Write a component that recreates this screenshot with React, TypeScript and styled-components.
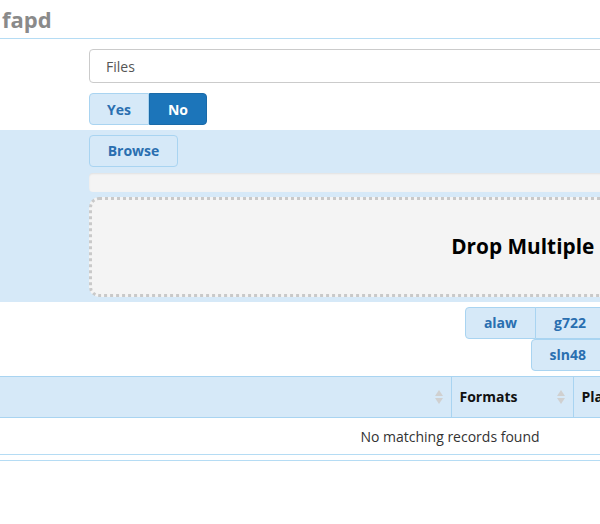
import React from 'react'
import styled, { createGlobalStyle } from 'styled-components'

const GlobalStyle = createGlobalStyle`
  html, body {
    margin: 0;
    padding: 0;
    background: #fff;
    overflow: hidden;
  }
  body {
    font-family: 'Open Sans', 'Liberation Sans', sans-serif;
    font-size: 14px;
    color: #333;
  }
`

const BLUE_BG = '#d6e9f8'
const BLUE_BORDER = '#a9d4f1'
const BLUE_TEXT = '#2a6fb0'

const Page = styled.div`
  width: 1064px;
`

const Title = styled.h2`
  margin: 0;
  height: 38px;
  padding-left: 2px;
  display: flex;
  align-items: center;
  font-size: 22px;
  font-weight: 700;
  color: #8a8a8a;
  border-bottom: 1px solid #b5dcf4;
  line-height: 1;
`

const FormRow = styled.div<{ $band?: boolean; $pt: number; $pb: number }>`
  display: flex;
  flex-direction: column;
  gap: ${({ $band }) => ($band ? '0' : '10px')};
  padding: ${({ $pt, $pb }) => `${$pt}px 0 ${$pb}px 89px`};
  background: ${({ $band }) => ($band ? BLUE_BG : 'transparent')};
`

const TextInput = styled.div`
  height: 34px;
  box-sizing: border-box;
  border: 1px solid #cbcbcb;
  border-radius: 4px;
  display: flex;
  align-items: center;
  padding: 0 16px;
  color: #555;
  font-size: 14px;
`

const Toggle = styled.div`
  display: flex;
`

const ToggleButton = styled.button<{ $active?: boolean; $w: number }>`
  width: ${({ $w }) => $w}px;
  height: 32px;
  margin: 0;
  font-family: inherit;
  font-size: 14px;
  font-weight: 700;
  border: 1px solid ${({ $active }) => ($active ? '#1a6aa8' : BLUE_BORDER)};
  background: ${({ $active }) => ($active ? '#1c75ba' : BLUE_BG)};
  color: ${({ $active }) => ($active ? '#fff' : BLUE_TEXT)};
  border-radius: ${({ $active }) => ($active ? '0 4px 4px 0' : '4px 0 0 4px')};
  padding: 0;
`

const BrowseButton = styled.button`
  width: 89px;
  height: 32px;
  margin: 0;
  font-family: inherit;
  font-size: 14px;
  font-weight: 700;
  color: ${BLUE_TEXT};
  background: ${BLUE_BG};
  border: 1px solid ${BLUE_BORDER};
  border-radius: 4px;
  padding: 0 0 2px;
`

const Progress = styled.div`
  height: 19px;
  margin-top: 6px;
  background: #f4f4f4;
  border-radius: 4px;
  box-shadow: inset 0 1px 2px rgba(0, 0, 0, 0.08);
`

const DropZone = styled.div`
  height: 100px;
  margin-top: 5px;
  box-sizing: border-box;
  border: 3px dotted #c9c9c9;
  border-radius: 10px;
  background: #f4f4f4;
  display: flex;
  align-items: center;
  justify-content: center;
  font-size: 20.8px;
  font-weight: 700;
  color: #000;
  padding-bottom: 2px;
`

const FormatRow = styled.div`
  padding: 5px 0 5px 463px;
`

const FormatGroup = styled.div`
  width: 142px;
  display: flex;
  flex-wrap: wrap;
  justify-content: flex-end;
`

const FormatButton = styled.button<{ $joined?: boolean; $last?: boolean }>`
  height: 32px;
  margin: 0 0 0 ${({ $joined }) => ($joined ? '-1px' : '0')};
  padding: 0 18px 2px;
  font-family: inherit;
  font-size: 14px;
  font-weight: 700;
  color: ${BLUE_TEXT};
  background: ${BLUE_BG};
  border: 1px solid ${BLUE_BORDER};
  border-radius: ${({ $joined, $last }) =>
    $joined ? '0 4px 4px 0' : $last ? '4px' : '4px 0 0 4px'};
`

const Table = styled.table`
  width: 900px;
  border-collapse: collapse;
  margin-bottom: 5px;
`

const HeadCell = styled.th<{ $w?: number }>`
  width: ${({ $w }) => ($w ? `${$w}px` : 'auto')};
  height: 41px;
  box-sizing: border-box;
  background: ${BLUE_BG};
  border-top: 1px solid ${BLUE_BORDER};
  border-bottom: 1px solid ${BLUE_BORDER};
  border-left: 1px solid ${BLUE_BORDER};
  text-align: left;
  padding: 0 8px 1px;
  font-size: 14px;
  font-weight: 700;
  color: #111;
  &:first-child {
    border-left: none;
  }
`

const HeadInner = styled.div`
  display: flex;
  align-items: center;
  justify-content: space-between;
`

const EmptyCell = styled.td`
  height: 37px;
  box-sizing: border-box;
  padding: 0;
  text-align: center;
  color: #333;
  font-size: 14px;
  border-bottom: 1px solid #b5dcf4;
`

const Rule = styled.div`
  width: 900px;
  border-top: 1px solid #b5dcf4;
`

const SortIcon = () => (
  <svg width="8" height="14" viewBox="0 0 8 14">
    <path d="M4 0 L8 6 L0 6 Z" fill="#d0d0d0" />
    <path d="M4 14 L8 8 L0 8 Z" fill="#d0d0d0" />
  </svg>
)

const columns = [
  { label: '', width: 451 },
  { label: 'Formats', width: 122 },
  { label: 'Platform', width: 0 },
]

export default function App() {
  return (
    <Page>
      <GlobalStyle />
      <Title>fapd</Title>
      <FormRow $pt={10} $pb={5}>
        <TextInput>Files</TextInput>
        <Toggle>
          <ToggleButton $w={60}>Yes</ToggleButton>
          <ToggleButton $w={58} $active>
            No
          </ToggleButton>
        </Toggle>
      </FormRow>
      <FormRow $band $pt={5} $pb={5}>
        <div>
          <BrowseButton>Browse</BrowseButton>
        </div>
        <Progress />
        <DropZone>Drop Multiple Files Here</DropZone>
      </FormRow>
      <FormatRow>
        <FormatGroup>
          <FormatButton>alaw</FormatButton>
          <FormatButton $joined>g722</FormatButton>
          <FormatButton $last>sln48</FormatButton>
        </FormatGroup>
      </FormatRow>
      <Table>
        <thead>
          <tr>
            {columns.map((c) => (
              <HeadCell key={c.label || 'name'} $w={c.width || undefined}>
                <HeadInner>
                  <span>{c.label}</span>
                  <SortIcon />
                </HeadInner>
              </HeadCell>
            ))}
          </tr>
        </thead>
        <tbody>
          <tr>
            <EmptyCell colSpan={3}>No matching records found</EmptyCell>
          </tr>
        </tbody>
      </Table>
      <Rule />
    </Page>
  )
}
